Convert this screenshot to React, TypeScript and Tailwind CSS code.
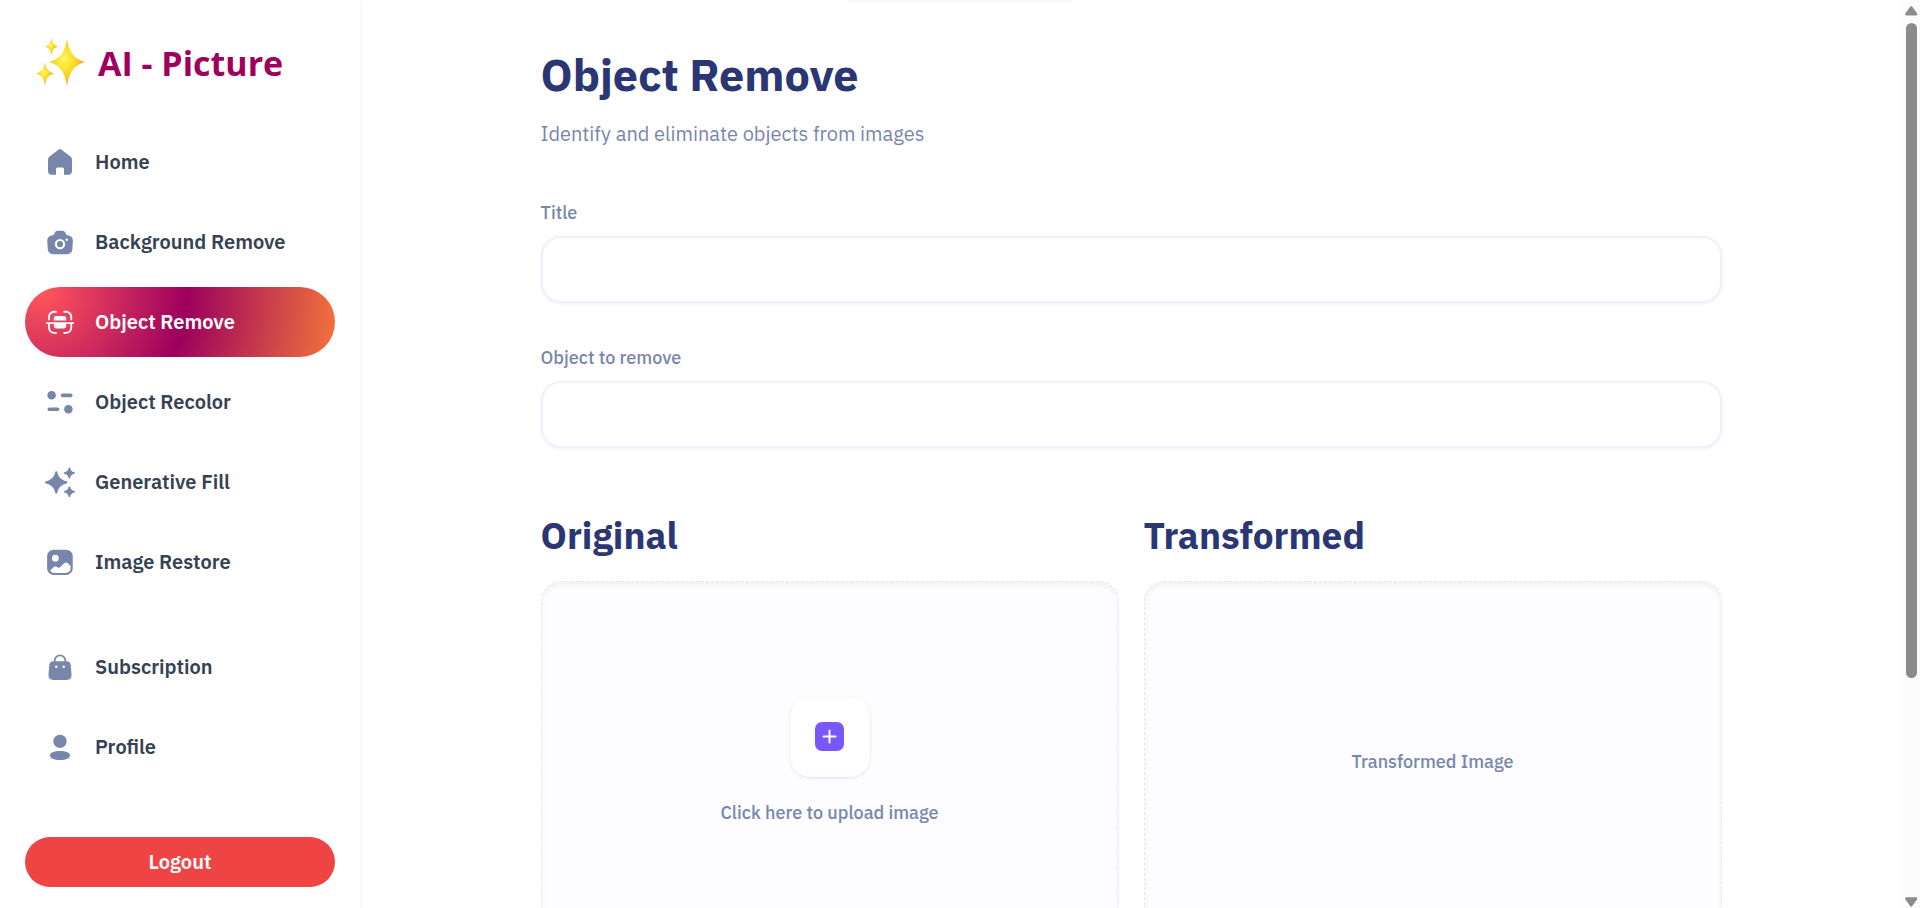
import React from "react";

interface IconProps {
  children: React.ReactNode;
}

const Icon: React.FC<IconProps> = ({ children }) => (
  <svg viewBox="0 0 24 24" className="size-[30px] shrink-0" fill="currentColor" aria-hidden="true">
    {children}
  </svg>
);

const HomeIcon = () => (
  <Icon>
    <path d="M10.5 2.3a2.4 2.4 0 0 1 3 0l6.9 5.2a3 3 0 0 1 1.2 2.4v9.3a2.9 2.9 0 0 1-2.9 2.9h-3.5v-4.6a1.2 1.2 0 0 0-1.2-1.2h-4a1.2 1.2 0 0 0-1.2 1.2v4.6H5.3a2.9 2.9 0 0 1-2.9-2.9V9.9a3 3 0 0 1 1.2-2.4z" />
  </Icon>
);

const CameraIcon = () => (
  <Icon>
    <path d="M8 4.2A2.2 2.2 0 0 1 9.9 3h4.3a2.2 2.2 0 0 1 1.9 1.2l.8 1.7c.2.4.6.6 1 .6a4.4 4.4 0 0 1 4.4 4.6l-.4 6.6a4.2 4.2 0 0 1-4.2 4H6.4a4.2 4.2 0 0 1-4.2-4l-.4-6.6a4.4 4.4 0 0 1 4.4-4.6c.4 0 .8-.2 1-.6z" />
    <circle cx="12" cy="13.7" r="3.3" fill="none" stroke="white" strokeWidth="1.7" />
    <circle cx="17.4" cy="10.2" r="1" fill="white" />
  </Icon>
);

const ScanIcon = () => (
  <Icon>
    <path
      d="M3.2 9.9V8a4.2 4.2 0 0 1 4.2-4.2h1.4M21 9.9V8a4.2 4.2 0 0 0-4.2-4.2h-1.4M3.2 14v2.5a4.2 4.2 0 0 0 4.2 4.2h1.4M21 14v2.5a4.2 4.2 0 0 1-4.2 4.2h-1.4"
      fill="none"
      stroke="currentColor"
      strokeWidth="1.5"
      strokeLinecap="round"
    />
    <path d="M1.4 12.1h21.2a.7.7 0 0 1 0 1.5H1.4a.7.7 0 0 1 0-1.5z" />
    <path d="M9.2 7.2h5.6A2.2 2.2 0 0 1 17 9.4v1.4H7V9.4a2.2 2.2 0 0 1 2.2-2.2zM7 13.4h10v1.5a2.2 2.2 0 0 1-2.2 2.2H9.2A2.2 2.2 0 0 1 7 14.9z" />
  </Icon>
);

const RecolorIcon = () => (
  <Icon>
    <circle cx="5.3" cy="6.6" r="3.4" />
    <circle cx="18.7" cy="17.7" r="3.4" />
    <path d="M14 6.7h6.6M3.4 17.8h6.7" stroke="currentColor" strokeWidth="2.9" strokeLinecap="round" />
  </Icon>
);

const StarsIcon = () => (
  <Icon>
    <path d="M9 3.3c.4 0 .7.3.8.7 1.1 4.3 2.9 6.2 7.5 7.4.9.3.9 1.4 0 1.7-4.6 1.2-6.4 3-7.5 7.4-.2.9-1.4.9-1.6 0-1.1-4.4-2.9-6.2-7.5-7.4-.9-.3-.9-1.4 0-1.7C5.3 10.2 7.1 8.3 8.2 4c.1-.4.4-.7.8-.7z" />
    <path d="M19.5.2c.3 0 .5.2.6.5.5 2 1.3 2.9 3.4 3.4.7.2.7 1 0 1.2-2.1.5-2.9 1.4-3.4 3.4-.2.7-1 .7-1.2 0-.5-2-1.3-2.9-3.4-3.4-.7-.2-.7-1 0-1.2 2.1-.5 2.9-1.4 3.4-3.4.1-.3.3-.5.6-.5z" />
    <path d="M19.5 15.3c.3 0 .5.2.6.5.5 2 1.3 2.9 3.4 3.4.7.2.7 1 0 1.2-2.1.5-2.9 1.4-3.4 3.4-.2.7-1 .7-1.2 0-.5-2-1.3-2.9-3.4-3.4-.7-.2-.7-1 0-1.2 2.1-.5 2.9-1.4 3.4-3.4.1-.3.3-.5.6-.5z" />
  </Icon>
);

const ImageIcon = () => (
  <Icon>
    <rect x="1.7" y="2.1" width="20.5" height="20.2" rx="5.4" />
    <circle cx="8.3" cy="8.9" r="2.7" fill="white" />
    <path
      d="M4.2 18.5l3-2.5c.8-.6 1.9-.5 2.7.1.7.6 1.7.6 2.4-.1l3-3c.9-.8 2.1-.9 3-.1l2.2 2.2v1.7c0 2.4-1.5 3.9-3.9 3.9H7.3c-1.4 0-2.6-.8-3.1-2.2z"
      fill="white"
    />
  </Icon>
);

const BagIcon = () => (
  <Icon>
    <path d="M7.8 9V6.8a4.2 4.2 0 0 1 8.4 0V9" fill="none" stroke="currentColor" strokeWidth="1.4" />
    <path d="M6.9 7.4h10.2c2.2 0 3.3 1.2 3.5 3.1l.6 7.3c.2 2.7-.8 4.5-4.2 4.5H7c-3.4 0-4.4-1.8-4.2-4.5l.6-7.3c.2-1.9 1.3-3.1 3.5-3.1z" />
    <circle cx="9" cy="11.7" r="1" fill="white" />
    <circle cx="15" cy="11.7" r="1" fill="white" />
  </Icon>
);

const ProfileIcon = () => (
  <Icon>
    <circle cx="12" cy="7.4" r="5.3" />
    <path d="M12 15.2c5 0 8 1.3 8 3.5s-3 3.6-8 3.6-8-1.4-8-3.6 3-3.5 8-3.5z" />
  </Icon>
);

const AddIcon = () => (
  <svg viewBox="0 0 30 30" className="size-[30px]" aria-hidden="true">
    <rect width="29" height="29" rx="7" fill="#7857ff" />
    <path d="M14.5 8.5v12M8.5 14.5h12" stroke="white" strokeWidth="2" strokeLinecap="round" />
  </svg>
);

const SparklesLogo = () => (
  <svg viewBox="0 0 50 50" className="size-[50px] shrink-0" aria-hidden="true">
    <defs>
      <radialGradient id="spark" cx="0.42" cy="0.42" r="0.55">
        <stop offset="0" stopColor="#fff46a" />
        <stop offset="0.35" stopColor="#fde52f" />
        <stop offset="0.75" stopColor="#f8c72a" />
        <stop offset="1" stopColor="#efab3c" />
      </radialGradient>
    </defs>
    <g fill="url(#spark)">
      <path d="M31 1c2.6 13.5 6.4 19.5 18 23-11.6 3.5-15.4 9.5-18 24-2.6-14.5-6.4-20.5-18-24 11.6-3.5 15.4-9.5 18-23z" />
      <path d="M15.5 0c1 5 2.5 7 6.5 8.5-4 1.5-5.5 3.5-6.5 8.5-1-5-2.5-7-6.5-8.5 4-1.5 5.5-3.5 6.5-8.5z" />
      <path d="M9 24.5c1.3 6.5 3.5 9.2 9 11-5.5 1.8-7.7 4.5-9 12-1.3-7.5-3.5-10.2-9-12 5.5-1.8 7.7-4.5 9-11z" />
    </g>
  </svg>
);

const mainLinks = [
  { label: "Home", icon: <HomeIcon /> },
  { label: "Background Remove", icon: <CameraIcon /> },
  { label: "Object Remove", icon: <ScanIcon />, active: true },
  { label: "Object Recolor", icon: <RecolorIcon /> },
  { label: "Generative Fill", icon: <StarsIcon /> },
  { label: "Image Restore", icon: <ImageIcon /> },
];

const accountLinks = [
  { label: "Subscription", icon: <BagIcon /> },
  { label: "Profile", icon: <ProfileIcon /> },
];

interface NavLinkProps {
  label: string;
  icon: React.ReactNode;
  active?: boolean;
}

const NavLink: React.FC<NavLinkProps> = ({ label, icon, active }) => (
  <li>
    <a
      href="#"
      aria-current={active ? "page" : undefined}
      className={`flex h-[70px] items-center gap-5 rounded-full px-5 text-[20px] leading-[30px] font-semibold whitespace-nowrap ${
        active
          ? "bg-[radial-gradient(circle_at_6%_10%,#ff555c_0%,#9c005d_48%,#f4743b_100%)] text-white"
          : "text-gray-700"
      }`}
    >
      <span className={active ? "text-[#f2feff]" : "text-[#7986ac]"}>{icon}</span>
      {label}
    </a>
  </li>
);

const Sidebar = () => (
  <aside className="z-10 flex w-[360px] shrink-0 flex-col bg-white px-[25px] pt-9 pb-[21px] shadow-[0_4px_6px_0_rgba(225,220,255,0.6)]">
    <a
      href="#"
      className="flex items-center gap-3 pl-[11px] font-['Open_Sans','Noto_Sans',sans-serif] text-[34px] leading-[54px] font-bold whitespace-nowrap text-[#9f005e]"
    >
      <SparklesLogo />
      AI - Picture
    </a>
    <nav className="mt-[37px] flex flex-1 flex-col justify-between">
      <ul className="flex flex-col gap-[10px]">
        {mainLinks.map((link) => (
          <NavLink key={link.label} {...link} />
        ))}
      </ul>
      <div>
        <ul className="flex flex-col gap-[10px]">
          {accountLinks.map((link) => (
            <NavLink key={link.label} {...link} />
          ))}
        </ul>
        <button type="button" className="mt-[55px] h-[50px] w-full rounded-full bg-[#ef4444] text-[20px] leading-[30px] font-semibold text-white">
          Logout
        </button>
      </div>
    </nav>
  </aside>
);

interface FieldProps {
  id: string;
  label: string;
}

const Field: React.FC<FieldProps> = ({ id, label }) => (
  <div className="flex flex-col gap-[10px]">
    <label htmlFor={id} className="text-[18px] leading-[26px] font-medium text-[#7986ac]">
      {label}
    </label>
    <input
      id={id}
      type="text"
      className="h-[67px] w-full rounded-[20px] border-2 border-[#f2eefe] bg-white px-5 text-[20px] text-[#2b3674] shadow-[0_1px_3px_0_rgba(225,220,255,0.5)] outline-none"
    />
  </div>
);

const boxClass =
  "flex h-[362px] w-full flex-col items-center justify-center gap-[22px] rounded-[20px] border border-dashed border-gray-200 bg-[#fdfcff] text-[18px] leading-7 font-medium text-[#7986ac] shadow-[inset_0_3px_5px_0_rgba(0,0,0,0.05)]";

// Static rendition of the classic window scrollbar
const Scrollbar = () => (
  <div className="flex w-[18px] shrink-0 flex-col items-center bg-[#fcfcfc]" aria-hidden="true">
    <svg viewBox="0 0 18 23" className="h-[23px] w-[18px]" fill="#8b8b8b">
      <path d="M8.3 6.5q.9-.9 1.8 0l5 7.1q.5 1.9-.9 2H4.2q-1.4-.1-.9-2z" />
    </svg>
    <div className="h-[655px] w-[11px] rounded-full bg-[#8b8b8b]" />
    <svg viewBox="0 0 18 12" className="mt-auto h-3 w-[18px]" fill="#8b8b8b">
      <path d="M8.3 10.3q.9.9 1.8 0l5-7.1q.5-1.9-.9-2H4.2q-1.4.1-.9 2z" />
    </svg>
  </div>
);

export default function App() {
  return (
    <div className="relative flex h-screen overflow-hidden bg-white font-['IBM_Plex_Sans','Noto_Sans',sans-serif]">
      <Sidebar />
      <div className="absolute -top-10 left-1/2 h-10 w-[230px] -translate-x-1/2 rounded-lg shadow-[0_0_6px_rgba(0,0,0,0.08)]" />
      <main className="min-w-0 flex-1 overflow-hidden px-10 pt-[46px]">
        <div className="mx-auto max-w-[1181px]">
          <h1 className="text-[45px] leading-[56px] font-bold text-[#2b3674]">Object Remove</h1>
          <p className="mt-[18px] text-[20px] leading-7 text-[#7986ac]">Identify and eliminate objects from images</p>
          <form className="mt-[52px] flex flex-col">
            <div className="flex flex-col gap-[42px]">
              <Field id="title" label="Title" />
              <Field id="prompt" label="Object to remove" />
            </div>
            <div className="mt-[62px] grid grid-cols-2 gap-[25px]">
              <section className="flex flex-col gap-[21px]">
                <h3 className="text-[37px] leading-[50px] font-bold text-[#2b3674]">Original</h3>
                <button type="button" className={boxClass}>
                  <span className="flex size-20 items-center justify-center rounded-[20px] bg-white shadow-[0_1px_3px_0_rgba(210,200,255,0.6)]">
                    <AddIcon />
                  </span>
                  Click here to upload image
                </button>
              </section>
              <section className="flex flex-col gap-[21px]">
                <h3 className="text-[37px] leading-[50px] font-bold text-[#2b3674]">Transformed</h3>
                <div className={boxClass}>Transformed Image</div>
              </section>
            </div>
          </form>
        </div>
      </main>
      <Scrollbar />
    </div>
  );
}
